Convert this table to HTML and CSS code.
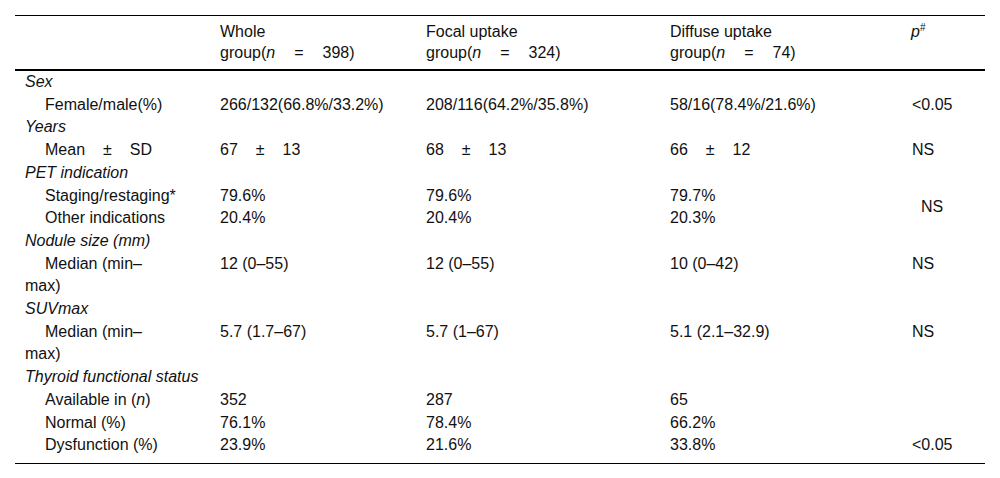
FILE: index.html
```html
<!DOCTYPE html>
<html>
<head>
<meta charset="utf-8">
<link rel="stylesheet" href="styles.css">
</head>
<body>
<div class="wrap">
<table class="data">
  <colgroup>
    <col class="c1"><col class="c2"><col class="c3"><col class="c4"><col class="c5">
  </colgroup>
  <thead>
    <tr>
      <th></th>
      <th>Whole<br>group(<i>n</i><span class="op">=</span>398)</th>
      <th>Focal uptake<br>group(<i>n</i><span class="op">=</span>324)</th>
      <th>Diffuse uptake<br>group(<i>n</i><span class="op">=</span>74)</th>
      <th class="pcol"><i>p</i><sup>#</sup></th>
    </tr>
  </thead>
  <tbody>
    <tr><td class="cat" colspan="5">Sex</td></tr>
    <tr><td class="sub">Female/male(%)</td><td>266/132(66.8%/33.2%)</td><td>208/116(64.2%/35.8%)</td><td>58/16(78.4%/21.6%)</td><td class="p">&lt;0.05</td></tr>
    <tr><td class="cat" colspan="5">Years</td></tr>
    <tr><td class="sub">Mean<span class="pm">±</span>SD</td><td>67<span class="pm">±</span>13</td><td>68<span class="pm">±</span>13</td><td>66<span class="pm">±</span>12</td><td class="p">NS</td></tr>
    <tr><td class="cat" colspan="5">PET indication</td></tr>
    <tr><td class="sub">Staging/restaging*</td><td>79.6%</td><td>79.6%</td><td>79.7%</td><td class="p span" rowspan="2">NS</td></tr>
    <tr><td class="sub">Other indications</td><td>20.4%</td><td>20.4%</td><td>20.3%</td></tr>
    <tr><td class="cat" colspan="5">Nodule size (mm)</td></tr>
    <tr><td class="sub">Median (min–<br>max)</td><td>12 (0–55)</td><td>12 (0–55)</td><td>10 (0–42)</td><td class="p">NS</td></tr>
    <tr><td class="cat" colspan="5">SUVmax</td></tr>
    <tr><td class="sub">Median (min–<br>max)</td><td>5.7 (1.7–67)</td><td>5.7 (1–67)</td><td>5.1 (2.1–32.9)</td><td class="p">NS</td></tr>
    <tr><td class="cat" colspan="5">Thyroid functional status</td></tr>
    <tr><td class="sub">Available in (<i>n</i>)</td><td>352</td><td>287</td><td>65</td><td class="p"></td></tr>
    <tr><td class="sub">Normal (%)</td><td>76.1%</td><td>78.4%</td><td>66.2%</td><td class="p"></td></tr>
    <tr class="last"><td class="sub">Dysfunction (%)</td><td>23.9%</td><td>21.6%</td><td>33.8%</td><td class="p">&lt;0.05</td></tr>
  </tbody>
</table>
</div>
</body>
</html>
```

FILE: styles.css
```css
html, body {
  margin: 0;
  padding: 0;
  background: #ffffff;
}
.wrap {
  padding: 15px 15px 0 15px;
}
.data {
  width: 970px;
  border-collapse: collapse;
  table-layout: fixed;
  font-family: "Liberation Sans", Arial, sans-serif;
  font-size: 16px;
  color: #111;
  border-top: 1px solid #000;
  border-bottom: 1px solid #000;
}
.c1 { width: 195px; }
.c2 { width: 206px; }
.c3 { width: 244px; }
.c4 { width: 242px; }
.c5 { width: 83px; }
.data th {
  font-weight: normal;
  text-align: left;
  vertical-align: top;
  line-height: 21px;
  padding: 5px 0 6px 10px;
  border-bottom: 2px solid #000;
}
.data th.pcol {
  padding-left: 9px;
}
.data sup {
  font-size: 10px;
  line-height: 0;
  vertical-align: 6px;
}
.data td {
  line-height: 22.7px;
  padding: 0 0 0 10px;
  vertical-align: top;
  white-space: nowrap;
}
.data td.cat {
  font-style: italic;
}
.data td.sub {
  text-indent: 20px;
}
.data td.p {
  padding-left: 10px;
}
.data td.span {
  vertical-align: middle;
  padding-left: 19px;
}
.data tr.last td {
  padding-bottom: 6px;
}
.op {
  padding: 0 19px;
}
.pm {
  padding: 0 18px;
}
```
